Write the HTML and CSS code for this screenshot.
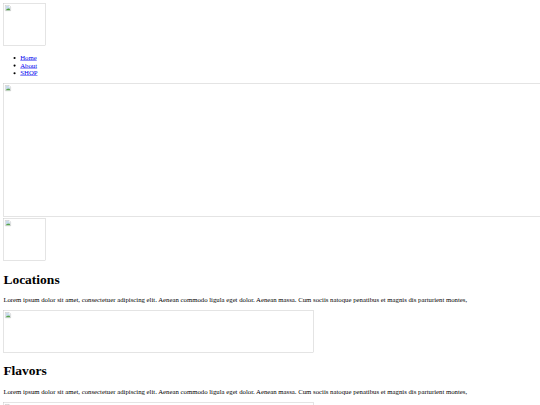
FILE: index.html
```html
<!DOCTYPE html>
<html lang="en">
<head>
<meta charset="utf-8">
<title>Shop</title>
<link rel="stylesheet" href="styles.css">
</head>
<body>
<div class="page">
<header class="site-header">
  <div class="line"><span class="broken logo"><svg class="icon" viewBox="0 0 16 16" width="16" height="16"><path d="M1.5 1.5h9l4 4v9h-13z" fill="#fff" stroke="#a0a0a0"/><path d="M3 3h7v3h3v7H3z" fill="#c9dced"/><path d="M3 13l3-4 2 2 2-3 3 4v1z" fill="#4f9d3a"/></svg></span></div>
  <nav>
    <ul class="menu">
      <li><a href="#">Home</a></li>
      <li><a href="#">About</a></li>
      <li><a href="#">SHOP</a></li>
    </ul>
  </nav>
</header>
<div class="line"><span class="broken hero"><svg class="icon" viewBox="0 0 16 16" width="16" height="16"><path d="M1.5 1.5h9l4 4v9h-13z" fill="#fff" stroke="#a0a0a0"/><path d="M3 3h7v3h3v7H3z" fill="#c9dced"/><path d="M3 13l3-4 2 2 2-3 3 4v1z" fill="#4f9d3a"/></svg></span></div>
<div class="line"><span class="broken logo"><svg class="icon" viewBox="0 0 16 16" width="16" height="16"><path d="M1.5 1.5h9l4 4v9h-13z" fill="#fff" stroke="#a0a0a0"/><path d="M3 3h7v3h3v7H3z" fill="#c9dced"/><path d="M3 13l3-4 2 2 2-3 3 4v1z" fill="#4f9d3a"/></svg></span></div>
<section class="block">
  <h1>Locations</h1>
  <p>Lorem ipsum dolor sit amet, consectetuer adipiscing elit. Aenean commodo ligula eget dolor. Aenean massa. Cum sociis natoque penatibus et magnis dis parturient montes,</p>
  <div class="line"><span class="broken banner"><svg class="icon" viewBox="0 0 16 16" width="16" height="16"><path d="M1.5 1.5h9l4 4v9h-13z" fill="#fff" stroke="#a0a0a0"/><path d="M3 3h7v3h3v7H3z" fill="#c9dced"/><path d="M3 13l3-4 2 2 2-3 3 4v1z" fill="#4f9d3a"/></svg></span></div>
</section>
<section class="block">
  <h1>Flavors</h1>
  <p>Lorem ipsum dolor sit amet, consectetuer adipiscing elit. Aenean commodo ligula eget dolor. Aenean massa. Cum sociis natoque penatibus et magnis dis parturient montes,</p>
  <div class="line"><span class="broken banner"><svg class="icon" viewBox="0 0 16 16" width="16" height="16"><path d="M1.5 1.5h9l4 4v9h-13z" fill="#fff" stroke="#a0a0a0"/><path d="M3 3h7v3h3v7H3z" fill="#c9dced"/><path d="M3 13l3-4 2 2 2-3 3 4v1z" fill="#4f9d3a"/></svg></span></div>
</section>
</div>
</body>
</html>
```
FILE: styles.css
```css
html {
  overflow: hidden;
}
body {
  margin: 0;
  background: #fff;
}
.page {
  width: 1264px;
  padding: 8px;
  transform: scale(0.421875);
  transform-origin: 0 0;
  font-family: "Liberation Serif", "Times New Roman", serif;
  font-size: 16px;
  color: #000;
}
.line {
  white-space: nowrap;
}
.broken {
  display: inline-block;
  box-sizing: border-box;
  border: 1px solid #c0c0c0;
  padding: 2px;
  vertical-align: baseline;
  background: #fff;
}
.icon {
  display: block;
}
.logo {
  width: 100px;
  height: 100px;
}
.hero {
  width: 1320px;
  height: 316px;
}
.banner {
  width: 735px;
  height: 100px;
}
.menu {
  margin: 16px 0;
  padding-left: 40px;
  list-style: disc;
}
.menu a {
  color: #0000ee;
  text-decoration: underline;
}
h1 {
  font-size: 32px;
  font-weight: bold;
  margin: 21.44px 0;
}
p {
  margin: 16px 0;
}
```
